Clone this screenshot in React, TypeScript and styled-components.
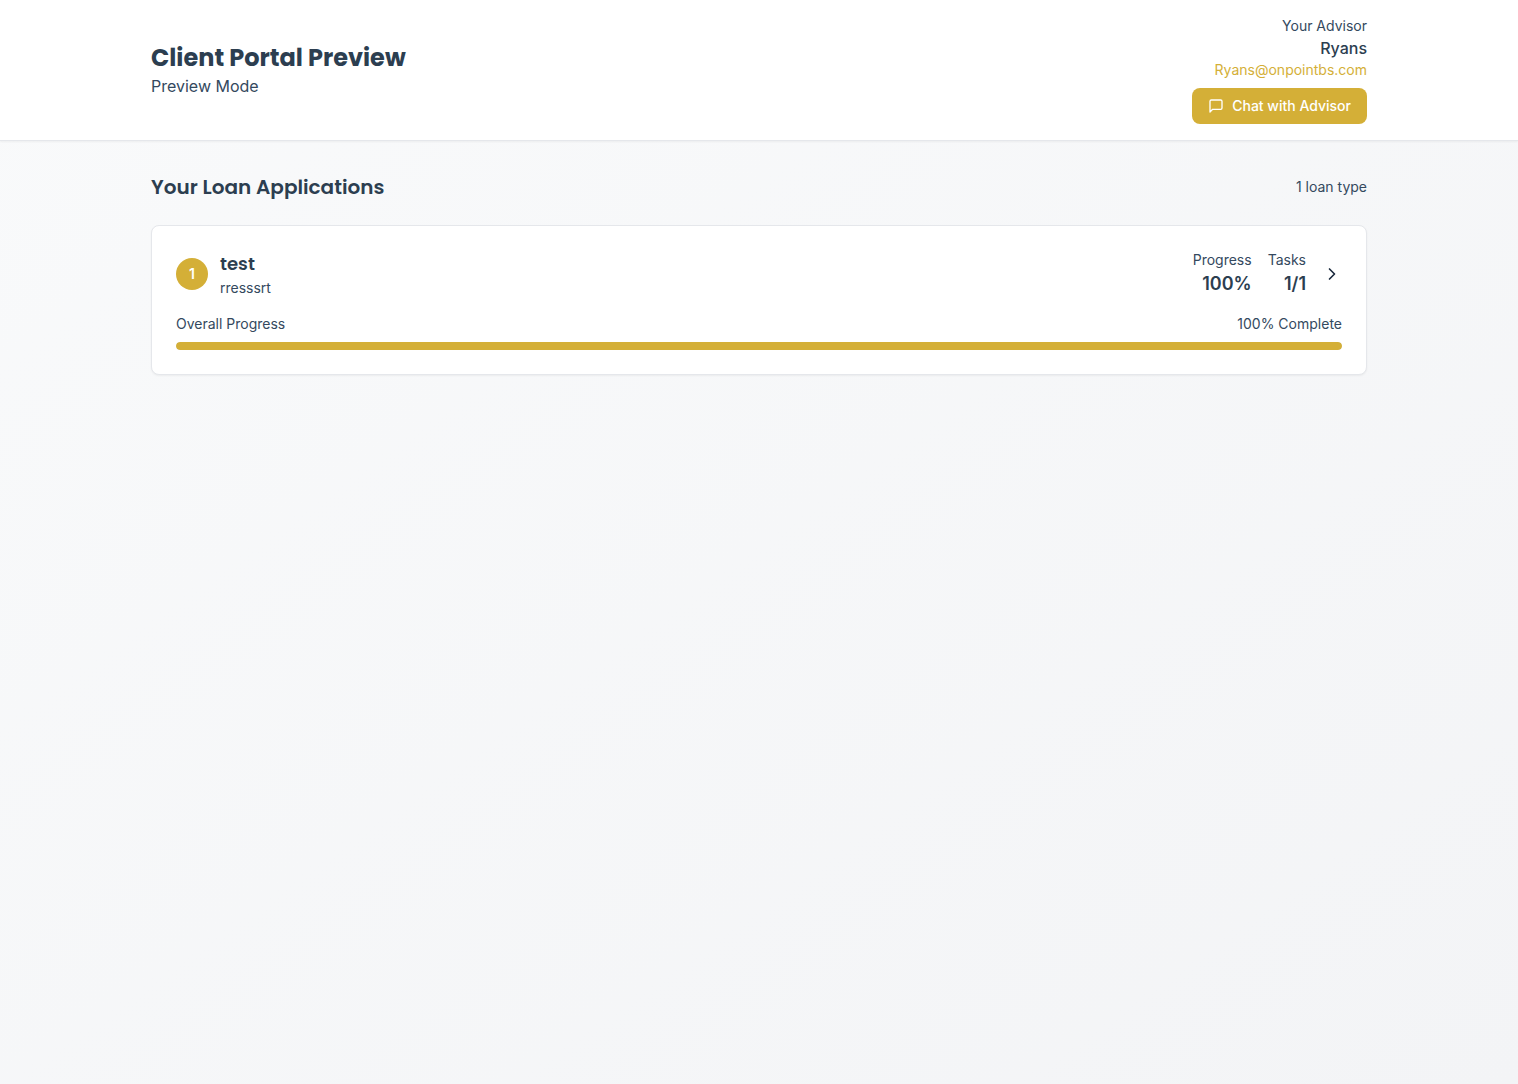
import React from "react";
import styled, { createGlobalStyle } from "styled-components";

const navy = "#2c3e50";
const slate = "#34495e";
const gold = "#d4af37";

const GlobalStyle = createGlobalStyle`
  *, *::before, *::after { box-sizing: border-box; }
  body {
    margin: 0;
    font-family: Inter, "Liberation Sans", sans-serif;
    font-size: 16px;
    line-height: 24px;
    color: ${navy};
    -webkit-font-smoothing: antialiased;
  }
  h1, h2, h3, p { margin: 0; }
`;

const Page = styled.div`
  min-height: 100vh;
  background: linear-gradient(to bottom right, #f9fafb, #f3f4f6);
`;

const Header = styled.header`
  background: #fff;
  border-bottom: 1px solid #e5e7eb;
  box-shadow: 0 1px 2px rgba(0, 0, 0, 0.05);
`;

const Container = styled.div`
  max-width: 1280px;
  margin: 0 auto;
  padding: 0 32px;
`;

const HeaderRow = styled(Container)`
  display: flex;
  align-items: center;
  justify-content: space-between;
  padding-top: 16px;
  padding-bottom: 16px;
`;

const Main = styled(Container)`
  padding-top: 32px;
  padding-bottom: 32px;
`;

const Title = styled.h1`
  font-family: Poppins, Inter, sans-serif;
  font-size: 24px;
  line-height: 32px;
  font-weight: 700;
`;

const Subtitle = styled.p`
  color: ${slate};
`;

const Advisor = styled.div`
  display: flex;
  flex-direction: column;
  align-items: flex-end;
`;

const Small = styled.p`
  font-size: 14px;
  line-height: 20px;
  color: ${slate};
`;

const AdvisorName = styled.p`
  font-weight: 500;
`;

const EmailLink = styled.a`
  font-size: 14px;
  line-height: 20px;
  color: ${gold};
  text-decoration: none;
`;

const ChatButton = styled.button`
  display: inline-flex;
  align-items: center;
  gap: 8px;
  height: 36px;
  margin-top: 8px;
  padding: 0 16px;
  border: 0;
  border-radius: 8px;
  background: ${gold};
  color: #fff;
  font: inherit;
  font-size: 14px;
  line-height: 20px;
  font-weight: 500;
  cursor: pointer;
`;

const SectionHead = styled.div`
  display: flex;
  align-items: center;
  justify-content: space-between;
  margin-bottom: 24px;
`;

const SectionTitle = styled.h2`
  font-family: Poppins, Inter, sans-serif;
  font-size: 20px;
  line-height: 28px;
  font-weight: 600;
`;

const Card = styled.article`
  display: flex;
  flex-direction: column;
  gap: 16px;
  padding: 24px;
  background: #fff;
  border: 1px solid #e5e7eb;
  border-radius: 8px;
  box-shadow: 0 1px 2px rgba(0, 0, 0, 0.05);
`;

const Row = styled.div<{ $gap?: number }>`
  display: flex;
  align-items: center;
  gap: ${({ $gap = 0 }) => $gap}px;
`;

const SpreadRow = styled(Row)`
  justify-content: space-between;
`;

const Badge = styled.span`
  display: flex;
  align-items: center;
  justify-content: center;
  width: 32px;
  height: 32px;
  border-radius: 50%;
  background: ${gold};
  color: #fff;
  font-size: 14px;
  line-height: 20px;
  font-weight: 600;
`;

const LoanName = styled.h3`
  font-family: Poppins, Inter, sans-serif;
  font-size: 18px;
  line-height: 28px;
  font-weight: 600;
`;

const Stat = styled.div`
  text-align: right;
`;

const StatValue = styled.p`
  font-size: 18px;
  line-height: 28px;
  font-weight: 600;
`;

const OpenButton = styled.button`
  display: flex;
  padding: 0;
  border: 0;
  background: none;
  color: #1b2a3d;
  cursor: pointer;
`;

const Track = styled.div`
  height: 8px;
  margin-top: 8px;
  border-radius: 4px;
  background: #e5e7eb;
  overflow: hidden;
`;

const Fill = styled.div`
  height: 100%;
  border-radius: 4px;
  background: ${gold};
`;

const Icon = ({ size, d }: { size: number; d: string }) => (
  <svg
    width={size}
    height={size}
    viewBox="0 0 24 24"
    fill="none"
    stroke="currentColor"
    strokeWidth="2"
    strokeLinecap="round"
    strokeLinejoin="round"
    aria-hidden="true"
  >
    <path d={d} />
  </svg>
);

const loans = [{ name: "test", description: "rresssrt", done: 1, total: 1 }];

export default function App() {
  return (
    <Page>
      <GlobalStyle />
      <Header>
        <HeaderRow>
          <div>
            <Title>Client Portal Preview</Title>
            <Subtitle>Preview Mode</Subtitle>
          </div>
          <Advisor>
            <Small>Your Advisor</Small>
            <AdvisorName>Ryans</AdvisorName>
            <EmailLink href="mailto:Ryans@onpointbs.com">Ryans@onpointbs.com</EmailLink>
            <ChatButton type="button">
              <Icon size={16} d="M21 15a2 2 0 0 1-2 2H7l-4 4V5a2 2 0 0 1 2-2h14a2 2 0 0 1 2 2z" />
              Chat with Advisor
            </ChatButton>
          </Advisor>
        </HeaderRow>
      </Header>
      <Main as="main">
        <SectionHead>
          <SectionTitle>Your Loan Applications</SectionTitle>
          <Small>1 loan type</Small>
        </SectionHead>
        {loans.map((loan, index) => {
          const percent = Math.round((loan.done / loan.total) * 100);
          return (
            <Card key={loan.name}>
              <SpreadRow>
                <Row $gap={12}>
                  <Badge>{index + 1}</Badge>
                  <div>
                    <LoanName>{loan.name}</LoanName>
                    <Small>{loan.description}</Small>
                  </div>
                </Row>
                <Row $gap={16}>
                  <Stat>
                    <Small>Progress</Small>
                    <StatValue>{`${percent}%`}</StatValue>
                  </Stat>
                  <Stat>
                    <Small>Tasks</Small>
                    <StatValue>{`${loan.done}/${loan.total}`}</StatValue>
                  </Stat>
                  <OpenButton type="button" aria-label="Open loan">
                    <Icon size={20} d="m9 18 6-6-6-6" />
                  </OpenButton>
                </Row>
              </SpreadRow>
              <div>
                <SpreadRow>
                  <Small>Overall Progress</Small>
                  <Small>{`${percent}% Complete`}</Small>
                </SpreadRow>
                <Track role="progressbar" aria-label="Overall Progress" aria-valuenow={percent}>
                  <Fill style={{ width: `${percent}%` }} />
                </Track>
              </div>
            </Card>
          );
        })}
      </Main>
    </Page>
  );
}
